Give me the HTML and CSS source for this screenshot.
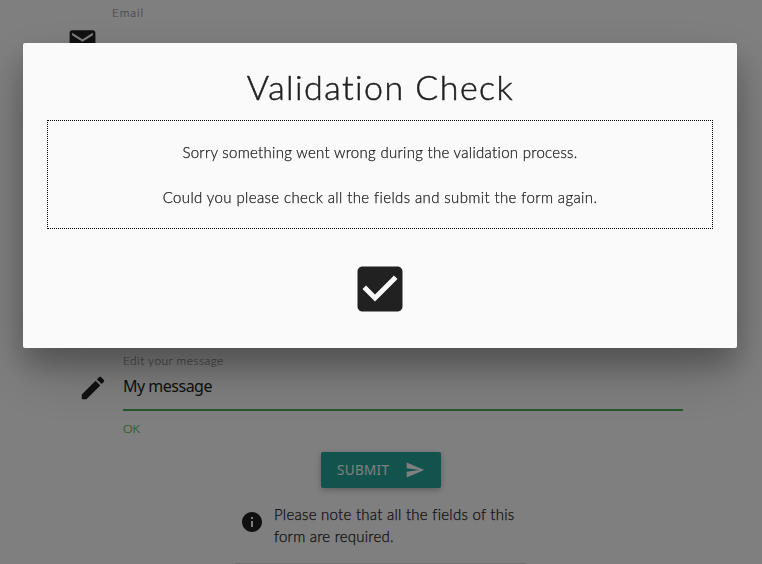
FILE: index.html
```html
<!DOCTYPE html>
<html lang="en">
<head>
<meta charset="utf-8">
<title>Validation Check</title>
<link rel="stylesheet" href="styles.css">
</head>
<body>
<main class="page">
  <section class="email">
    <span class="email-label">Email</span>
    <svg class="mail-icon" viewBox="0 0 24 24"><path d="M20 4H4c-1.1 0-1.99.9-1.99 2L2 18c0 1.100.9 2 2 2h16c1.100 0 2-.9 2-2V6c0-1.100-.9-2-2-2zm0 4l-8 5-8-5V6l8 5 8-5v2z"/></svg>
  </section>
  <section class="message">
    <svg class="edit-icon" viewBox="0 0 24 24"><path d="M3 17.250V21h3.750L17.810 9.940l-3.750-3.750L3 17.250zM20.710 7.040c.39-.39.39-1.020 0-1.410l-2.340-2.340c-.39-.39-1.020-.39-1.410 0l-1.830 1.830 3.750 3.750 1.830-1.830z"/></svg>
    <div class="field">
      <span class="field-label">Edit your message</span>
      <div class="field-value"><span>My message</span></div>
      <span class="field-ok">OK</span>
    </div>
  </section>
  <button class="submit"><span>SUBMIT</span>
    <svg class="send-icon" viewBox="0 0 24 24"><path d="M2.010 21L23 12 2.010 3 2 10l15 2-15 2z"/></svg>
  </button>
  <section class="note">
    <svg class="info-icon" viewBox="0 0 24 24"><path d="M12 2C6.480 2 2 6.480 2 12s4.480 10 10 10 10-4.480 10-10S17.520 2 12 2zm1 15h-2v-6h2v6zm0-8h-2V7h2v2z"/></svg>
    <p><span class="note-first">Please note that all the fields of this</span><br><span class="note-second">form are required.</span></p>
  </section>
</main>
<div class="overlay"></div>
<div class="modal" role="dialog">
  <h1><span>Validation Check</span></h1>
  <div class="notice">
    <p class="sorry">Sorry something went wrong during the validation process.</p>
    <p class="please">Could you please check all the fields and submit the form again.</p>
  </div>
  <svg class="check-icon" viewBox="0 0 24 24"><path d="M19 3H5c-1.110 0-2 .9-2 2v14c0 1.100.89 2 2 2h14c1.110 0 2-.9 2-2V5c0-1.100-.89-2-2-2zm-9 14l-5-5 1.410-1.410L10 14.170l7.590-7.590L19 8l-9 9z"/></svg>
</div>
</body>
</html>
```
FILE: styles.css
```css
* { box-sizing: border-box; }
body {
  margin: 0;
  height: 564px;
  overflow: hidden;
  background: #fff;
  color: #212121;
  font-family: Lato, "Open Sans", sans-serif;
  font-size: 15px;
  font-weight: 300;
}
p, h1 { margin: 0; }
svg { display: block; flex: none; fill: #212121; }

.page { display: flex; flex-direction: column; height: 564px; }
.email { height: 352px; }
.email-label {
  display: block;
  margin-left: 112px;
  padding-top: 5px;
  line-height: 16px;
  font-size: 12px;
  letter-spacing: .9px;
  color: #909090;
  -webkit-text-stroke: .2px;
}
.mail-icon { width: 31px; height: 31px; margin: 4px 0 0 67px; }

.message { display: flex; height: 100px; padding-left: 78px; }
.edit-icon { width: 30px; height: 30px; margin: 21px 15px 0 0; }
.field { width: 560px; }
.field-label {
  display: block;
  padding-top: 1px;
  line-height: 16px;
  font-size: 12px;
  letter-spacing: .42px;
  color: #909090;
  -webkit-text-stroke: .2px;
}
.field-value {
  height: 42px;
  line-height: 35px;
  border-bottom: 2px solid #4caf50;
  font-family: "Noto Sans", sans-serif;
  font-size: 16px;
  font-weight: 400;
  letter-spacing: -.5px;
}
.field-ok {
  display: block;
  margin-top: 10px;
  line-height: 16px;
  font-size: 12px;
  color: #4caf50;
  -webkit-text-stroke: .2px;
}

.submit {
  display: flex;
  align-items: center;
  justify-content: space-between;
  flex: none;
  width: 120px;
  height: 36px;
  margin-left: 321px;
  padding: 0 16px;
  border: 0;
  border-radius: 2px;
  background: #26a69a;
  color: #fff;
  font-family: "Noto Sans", sans-serif;
  font-size: 13.5px;
  letter-spacing: .3px;
  box-shadow: 0 2px 5px rgba(0, 0, 0, .16), 0 2px 10px rgba(0, 0, 0, .12);
}
.send-icon { width: 20px; height: 20px; fill: #fff; }

.note {
  display: flex;
  width: 291px;
  height: 76px;
  margin-left: 235px;
  padding: 16px 0 0 5px;
  border-bottom: 1px solid #e0e0e0;
  line-height: 22px;
}
.info-icon { width: 24px; height: 24px; margin: 6px 10px 0 0; }
.note p {
  margin-top: -1px;
  white-space: nowrap;
  -webkit-text-stroke: .25px;
}
.note-first { letter-spacing: .26px; }
.note-second { letter-spacing: .22px; }

.overlay {
  position: fixed;
  inset: 0;
  background: rgba(0, 0, 0, .5);
}
.modal {
  position: fixed;
  top: 43px;
  left: 23px;
  width: 714px;
  height: 305px;
  padding: 24px;
  border-radius: 2px;
  background: #fafafa;
  text-align: center;
  box-shadow: 0 16px 28px rgba(0, 0, 0, .22), 0 25px 55px rgba(0, 0, 0, .21);
}
.modal h1 {
  height: 53px;
  line-height: 40px;
  padding-left: 1px;
  font-size: 34px;
  font-weight: 300;
  letter-spacing: 1.45px;
  -webkit-text-stroke: .5px;
}
.notice {
  height: 109px;
  padding-top: 20px;
  border: 1px dotted #000;
  line-height: 22px;
  -webkit-text-stroke: .25px;
}
.notice p + p { margin-top: 23px; }
.sorry { letter-spacing: .29px; }
.please { letter-spacing: .38px; }
.check-icon { width: 60px; height: 60px; margin: 30px auto 0; }
```
